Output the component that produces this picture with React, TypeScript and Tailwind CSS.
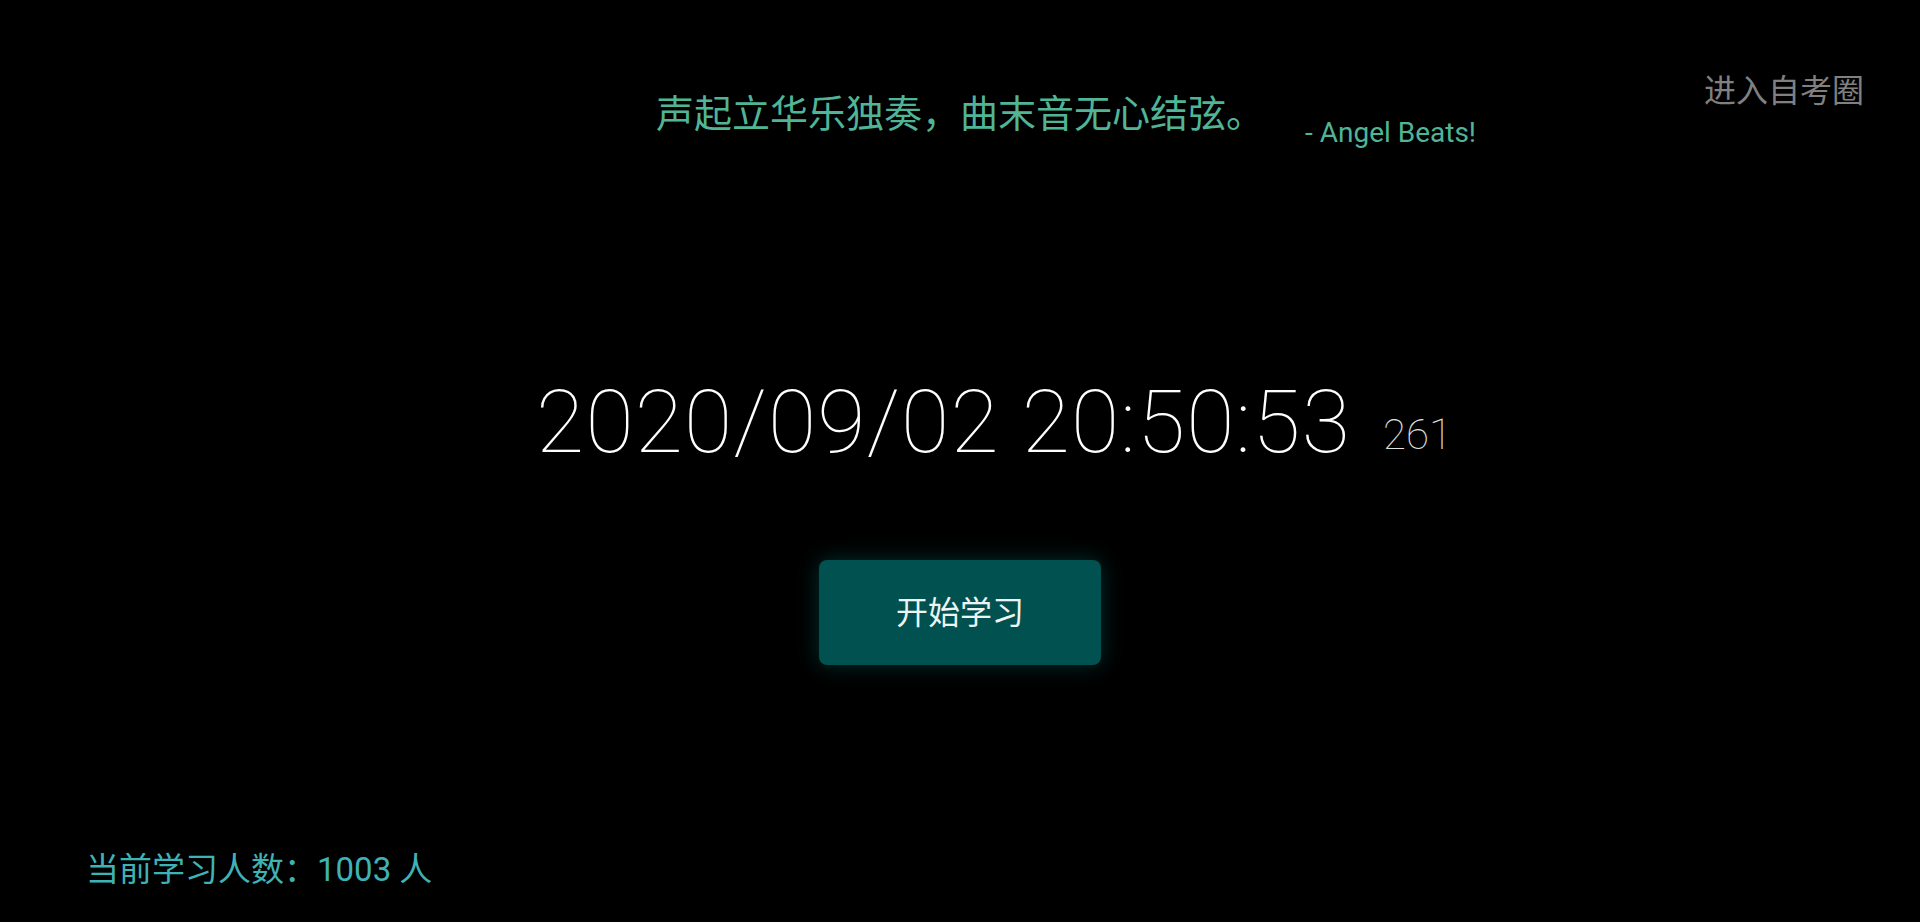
import React from "react";

const fontStack = { fontFamily: "Roboto, 'Noto Sans CJK SC', sans-serif" };

const StudyHome = () => {
  return (
    <main className="flex h-[922px] w-full flex-col overflow-hidden bg-black" style={fontStack}>
      <header className="grid grid-cols-[1fr_auto_1fr] items-start pt-[75px]">
        <div />
        <p className="mt-[20px] text-[38px] leading-[38px] text-[#50b597]">声起立华乐独奏，曲末音无心结弦。</p>
        <div className="flex items-start justify-between">
          <span className="ml-[41px] mt-[44px] text-[28px] leading-[28px] text-[#50b597]">- Angel Beats!</span>
          <a className="mr-[56px] cursor-pointer text-[32px] leading-[32px] text-[#808080]">进入自考圈</a>
        </div>
      </header>

      <section className="mt-[231px] flex items-end justify-center pl-[68px]">
        <span className="text-[88px] font-thin leading-[88px] tracking-[1.1px] text-white">2020/09/02 20:50:53</span>
        <span className="mb-[10px] ml-[32px] text-[42px] font-thin leading-[42px] text-[#e0e0e0]">261</span>
      </section>

      <div className="mt-[94px] flex justify-center">
        <button className="h-[105px] w-[282px] rounded-[8px] bg-[#00514f] text-[32px] text-[#eef4f3] shadow-[0_0_22px_rgba(0,140,130,0.35)]">
          开始学习
        </button>
      </div>

      <footer className="mt-auto pb-[36px] pl-[86px]">
        <p className="text-[33px] leading-[33px] text-[#3fb2b6]">当前学习人数：1003 人</p>
      </footer>
    </main>
  );
};

export default StudyHome;
